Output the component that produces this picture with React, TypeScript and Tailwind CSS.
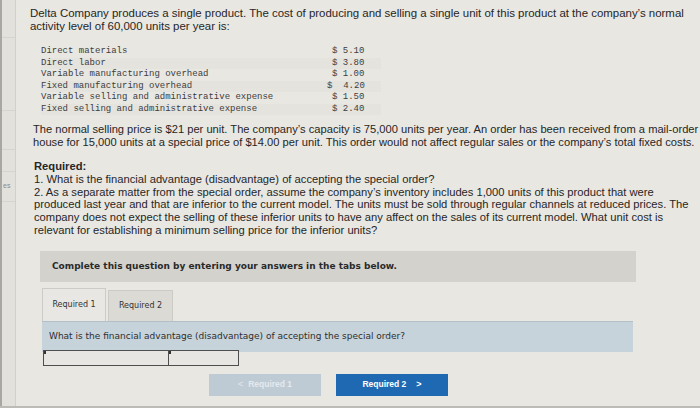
import React from "react";

const rows: [string, string, boolean][] = [
  ["Direct materials", "$ 5.10", false],
  ["Direct labor", "$ 3.80", true],
  ["Variable manufacturing overhead", "$ 1.00", false],
  ["Fixed manufacturing overhead", "$  4.20", true],
  ["Variable selling and administrative expense", "$ 1.50", false],
  ["Fixed selling and administrative expense", "$ 2.40", true],
];

export default function App() {
  return (
    <div className="w-[700px] h-[408px] overflow-hidden flex bg-[#e9e7e2] text-[#262626] border-b-[2px] border-[#bdbbb6]" style={{ fontFamily: '"Liberation Sans", Arial, sans-serif' }}>
      {/* sidebar */}
      <div className="w-[16px] shrink-0 flex flex-col bg-[#e3e1dc] border-r border-[#d2d0ca] border-l-[2px] border-l-[#a9a7a2]">
        <div className="h-[38px] border-b border-[#d6d4cf]" />
        <div className="h-[72px]" />
        <div className="h-[40px] border-y border-[#d6d4cf]" />
        <div className="h-[22px] border-b border-[#d6d4cf]" />
        <div className="h-[30px] border-b border-[#d6d4cf] flex items-center text-[7px] text-[#8a8a8a] pl-[1px]">es</div>
      </div>

      {/* main */}
      <div className="flex-1 min-w-0 pl-[14px] pt-[7px] overflow-hidden">
        <div className="text-[11.45px] leading-[13px] whitespace-nowrap">
          <div>Delta Company produces a single product. The cost of producing and selling a single unit of this product at the company’s normal</div>
          <div>activity level of 60,000 units per year is:</div>
        </div>

        <div className="mt-[13px] ml-[6px] w-[345px] pl-[5px] text-[9px] leading-[11.5px] text-[#3d3d3d]" style={{ fontFamily: '"Liberation Mono", "Courier New", monospace' }}>
          {rows.map(([l, v, shade], i) => (
            <div key={i} className={`flex ${shade ? "bg-[#e5e3de]" : ""}`}>
              <div className="w-[291px] whitespace-pre">{l}</div>
              <div className={`whitespace-pre ${v.includes("  ") ? "-ml-[5px]" : ""}`}>{v}</div>
            </div>
          ))}
        </div>

        <div className="mt-[8px] ml-[3px] text-[11.15px] leading-[13px] whitespace-nowrap">
          <div>The normal selling price is $21 per unit. The company’s capacity is 75,000 units per year. An order has been received from a mail-order</div>
          <div>house for 15,000 units at a special price of $14.00 per unit. This order would not affect regular sales or the company’s total fixed costs.</div>
        </div>

        <div className="mt-[11px] ml-[4px] text-[11.2px] leading-[12.8px] whitespace-nowrap">
          <div className="font-bold">Required:</div>
          <div>1. What is the financial advantage (disadvantage) of accepting the special order?</div>
          <div>2. As a separate matter from the special order, assume the company’s inventory includes 1,000 units of this product that were</div>
          <div>produced last year and that are inferior to the current model. The units must be sold through regular channels at reduced prices. The</div>
          <div>company does not expect the selling of these inferior units to have any affect on the sales of its current model. What unit cost is</div>
          <div>relevant for establishing a minimum selling price for the inferior units?</div>
        </div>

        <div className="mt-[14px] ml-[10px] w-[596px] h-[31px] bg-[#d4d2cd] flex items-center pl-[12px] text-[9px] font-bold text-[#2a2a2a]" style={{ fontFamily: '"DejaVu Sans", Verdana, sans-serif' }}>
          Complete this question by entering your answers in the tabs below.
        </div>

        <div className="mt-[6px] ml-[12px] w-[591px]" style={{ fontFamily: '"DejaVu Sans", Verdana, sans-serif' }}>
          <div className="flex items-end gap-[2px] text-[8px] text-[#333]">
            <div className="w-[64px] h-[33px] flex items-center justify-center bg-[#e8e7e3] border border-b-0 border-[#cdcbc6]">Required 1</div>
            <div className="w-[65px] h-[31px] flex items-center justify-center bg-[#dcdad5] border border-b-0 border-[#cdcbc6]">Required 2</div>
          </div>
          <div className="h-[31px] bg-[#c7d3db] border-t border-[#b4c0c8] flex items-center pl-[7px] text-[9px] text-[#2e2e2e]">
            What is the financial advantage (disadvantage) of accepting the special order?
          </div>
          <div className="flex -mt-[2px] ml-[1px]">
            <div className="relative w-[126px] h-[16px] border-[1.5px] border-[#4e4e4e] bg-[#e7e6e2]">
              <div className="absolute left-0 top-0 w-[2px] h-[3px] bg-[#333]" />
            </div>
            <div className="relative w-[70px] h-[16px] border-[1.5px] border-l-0 border-[#4e4e4e] bg-[#e7e6e2]">
              <div className="absolute left-0 top-0 w-[2px] h-[3px] bg-[#333]" />
            </div>
          </div>
          <div className="mt-[8px] ml-[167px] flex gap-[15px] text-[8.5px] font-bold" style={{ fontFamily: '"Liberation Sans", Arial, sans-serif' }}>
            <div className="w-[112px] h-[22px] bg-[#bfcbd4] text-[#e4e9ee] flex items-center justify-center gap-[5px]">
              <span className="font-normal text-[9px]">&lt;</span>
              <span>Required 1</span>
            </div>
            <div className="w-[112px] h-[22px] bg-[#1f69b3] text-white flex items-center justify-center gap-[10px]">
              <span>Required 2</span>
              <span className="text-[9px]">&gt;</span>
            </div>
          </div>
        </div>
      </div>
    </div>
  );
}
